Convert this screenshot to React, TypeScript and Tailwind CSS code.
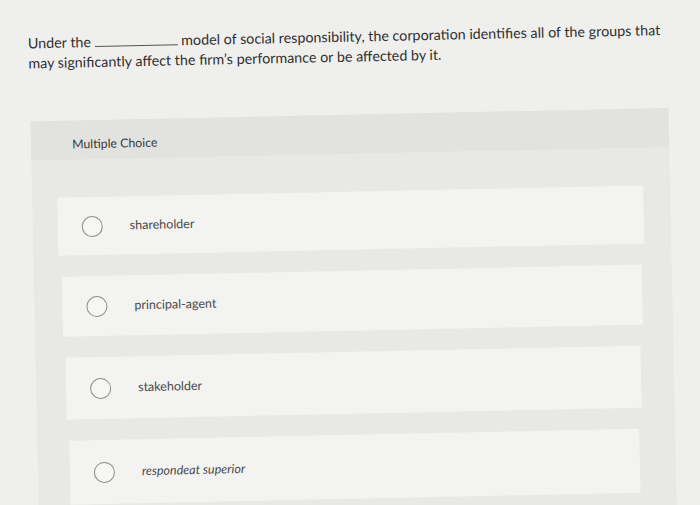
import { ReactNode } from "react"

interface Choice {
    readonly label: string
    readonly rowClass: string
    readonly italic?: boolean
}

// the photo is tilted a little, so rows drift right going down
const choices: Choice[] = [
    { label: "shareholder", rowClass: "ml-0 mr-0 h-[58px]" },
    { label: "principal-agent", rowClass: "ml-[3px] mr-[3px] h-[60px]" },
    { label: "stakeholder", rowClass: "ml-[5px] mr-[6px] h-[62px]" },
    { label: "respondeat superior", rowClass: "ml-[7px] mr-[9px] h-[64px]", italic: true },
]

function Radio() {
    return <div className="w-[21px] h-[21px] rounded-full border-[1.5px] border-[#8c8c8a] bg-[#f6f6f4] shrink-0"></div>
}

function Row({ children, className }: { children: ReactNode; className: string }) {
    return (
        <div className={`bg-[#f3f3f1] flex items-center gap-[27px] pl-[24px] ${className}`}>
            {children}
        </div>
    )
}

export default function App() {
    return (
        <div className="w-[700px] h-[505px] overflow-hidden bg-[#efefed] font-['Lato','Open_Sans',sans-serif]">
            <div className="w-[700px] h-[540px] origin-top-left -rotate-[1.2deg]">
                <p className="pt-[34px] pl-[27px] pr-[20px] text-[14.3px] leading-[20px] text-[#303030]">
                    Under the <span className="inline-block w-[83px] h-[1px] bg-[#555]"></span> model of social responsibility, the corporation identifies all of the groups that may significantly affect the firm’s performance or be affected by it.
                </p>

                <div className="mt-[48px] ml-[28px] w-[638px] bg-[#e8e8e6]">
                    <div className="h-[39px] bg-[#e2e2e0] pl-[41px] pt-[17px] text-[12.3px] leading-[14px] text-[#3c3c3c]">
                        Multiple Choice
                    </div>
                    <div className="pt-[38px] pl-[25px] pr-[27px] pb-[20px] flex flex-col gap-[21px]">
                        {choices.map((c) => (
                            <Row key={c.label} className={c.rowClass}>
                                <Radio />
                                <span className={`text-[12.5px] text-[#4a4a4a] ${c.italic ? "italic" : ""}`}>{c.label}</span>
                            </Row>
                        ))}
                    </div>
                </div>
            </div>
        </div>
    )
}
